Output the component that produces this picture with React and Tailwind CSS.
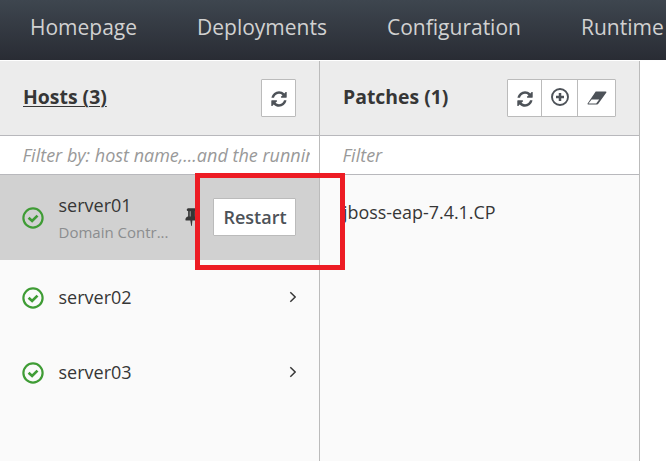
import React from "react";

const Refresh = () => (
  <svg className="mt-px block size-[18px] text-[#4d5258]" viewBox="0 0 1792 1792" fill="currentColor">
    <path d="M1639 1056q0 5-1 7-64 268-268 434.5t-478 166.5q-146 0-282.5-55t-243.5-157l-129 129q-19 19-45 19t-45-19-19-45v-448q0-26 19-45t45-19h448q26 0 45 19t19 45-19 45l-137 137q71 66 161 102t187 36q134 0 250-65t186-179q11-17 53-117 8-23 30-23h192q13 0 22.5 9.5t9.5 22.5zm25-800v448q0 26-19 45t-45 19h-448q-26 0-45-19t-19-45 19-45l138-138q-148-137-349-137-134 0-250 65t-186 179q-11 17-53 117-8 23-30 23h-199q-13 0-22.5-9.5t-9.5-22.5v-7q65-268 270-434.5t480-166.5q146 0 284 55.5t245 156.5l130-129q19-19 45-19t45 19 19 45z" />
  </svg>
);

const Add = () => (
  <svg className="mb-0.5 block size-[18px] text-[#4d5258]" viewBox="0 0 18 18" fill="none" stroke="currentColor">
    <circle cx="9" cy="9" r="8" strokeWidth="1.9" />
    <path d="M9 5v8M5 9h8" strokeWidth="2.5" />
  </svg>
);

const Eraser = () => (
  <svg className="block h-[14px] w-5 text-[#4d5258]" viewBox="0 0 20 14">
    <path d="M8.7 0.5H18.6Q20 0.5 19.2 1.8L11.3 12.8Q10.8 13.5 10 13.5H1.2Q-.1 13.5.8 12.2Z" fill="currentColor" />
    <path d="M4.6 8.4H12.2L9.2 12.6H1.5Z" fill="white" />
  </svg>
);

const Pin = () => (
  <svg className="mb-0.5 block size-[19px] shrink-0 text-[#363636]" viewBox="0 0 1792 1792" fill="currentColor">
    <path d="M800 864v-448q0-14-9-23t-23-9-23 9-9 23v448q0 14 9 23t23 9 23-9 9-23zm672 352q0 26-19 45t-45 19h-429l-51 483q-2 12-10.5 20.5t-20.5 8.5h-1q-27 0-32-27l-76-485h-404q-26 0-45-19t-19-45q0-123 78.5-221.5t177.5-98.5v-512q-52 0-90-38t-38-90 38-90 90-38h640q52 0 90 38t38 90-38 90-90 38v512q99 0 177.5 98.5t78.5 221.5z" />
  </svg>
);

const Ok = () => (
  <svg className="block size-[22px] shrink-0 text-[#3f9c35]" viewBox="0 0 22 22" fill="none" stroke="currentColor">
    <circle cx="11" cy="11" r="9.6" strokeWidth="2.2" />
    <path d="M6.6 10.8l3.5 3.2 5.4-5.4" strokeWidth="2.7" />
  </svg>
);

const Chevron = () => (
  <svg className="mb-px ml-auto block h-3 w-[7px]" viewBox="0 0 7 12" fill="none" stroke="#363636" strokeWidth="1.5">
    <path d="M1.3 1.3L6.2 6 1.3 10.7" />
  </svg>
);

const Title = ({ children, underline }) => (
  <h2 className={"text-[19.4px] leading-[28px] font-bold whitespace-nowrap text-[#363636] " + (underline ? "underline decoration-1 underline-offset-[2px]" : "")}>
    {children}
  </h2>
);

const ServerRow = ({ name }) => (
  <li className="flex h-[75px] items-center pr-[23px] pl-[22px]">
    <Ok />
    <span className="mb-0.5 ml-[14.5px] text-[18px] leading-6">{name}</span>
    <Chevron />
  </li>
);

export default function App() {
  return (
    <div className="relative flex h-[461px] w-[666px] flex-col overflow-hidden bg-white font-['Open_Sans',sans-serif] text-[#363636]">
      <nav className="flex h-[60px] shrink-0 bg-linear-to-b from-[#3e464f] to-[#292c34] pl-[30px] text-[21px] leading-[55px] whitespace-nowrap text-[#d1d1d1]">
        <span className="w-[167px] shrink-0">Homepage</span>
        <span className="w-[190px] shrink-0">Deployments</span>
        <span className="w-[194px] shrink-0">Configuration</span>
        <span className="shrink-0">Runtime</span>
      </nav>
      <main className="mt-px flex flex-1">
        <section className="flex w-80 flex-col border-r border-[#bbbbbb] bg-[#fafafa]">
          <header className="flex h-[75px] shrink-0 justify-between border-b border-[#b8b8bc] bg-[#ececec] pt-[18px] pr-[23px] pl-[23px]">
            <div className="pt-1"><Title underline>Hosts (3)</Title></div>
            <button className="flex h-[38px] w-[35px] items-center justify-center rounded-[1px] border border-[#bbb] bg-white"><Refresh /></button>
          </header>
          <div className="h-[39px] shrink-0 border-b border-[#b8b8bc] bg-white pr-[9px] pl-[22.5px]">
            <div className="overflow-hidden text-[18px] leading-[38px] whitespace-nowrap text-[#999] italic">Filter by: host name,...and the running</div>
          </div>
          <ul>
            <li className="flex h-[85px] items-center bg-[#d1d1d1] pl-[22px]">
              <Ok />
              <div className="mt-0.5 ml-[14.5px] w-[123.5px]">
                <div className="text-[18px] leading-[27px]">server01</div>
                <div className="text-[15px] leading-[27px] text-[#8b8d8f]">Domain Contr...</div>
              </div>
              <Pin />
              <button className="mb-px ml-[12px] h-[38px] w-[83px] rounded-[1px] border border-[#bbb] bg-white pl-px text-[18px] leading-[35px] font-semibold text-[#4d5258]">Restart</button>
            </li>
            <ServerRow name="server02" />
            <ServerRow name="server03" />
          </ul>
        </section>
        <section className="flex w-80 flex-col border-r border-[#bbbbbb] bg-[#fafafa]">
          <header className="flex h-[75px] shrink-0 justify-between border-b border-[#b8b8bc] bg-[#ececec] pt-[18px] pr-[23px] pl-[23px]">
            <div className="pt-1"><Title>Patches (1)</Title></div>
            <div className="flex h-[38px] divide-x divide-[#bbb] rounded-[1px] border border-[#bbb] bg-white">
              <button className="flex w-[34px] items-center justify-center"><Refresh /></button>
              <button className="flex w-9 items-center justify-center"><Add /></button>
              <button className="flex w-[37px] items-center justify-center"><Eraser /></button>
            </div>
          </header>
          <div className="h-[39px] shrink-0 border-b border-[#b8b8bc] bg-white pl-[22.5px] text-[18px] leading-[38px] text-[#999] italic">Filter</div>
          <div className="flex h-[75px] items-center pl-[23px] text-[17.9px]">jboss-eap-7.4.1.CP</div>
        </section>
      </main>
      <div className="absolute top-[173px] left-[195px] h-[97px] w-[150px] border-5 border-[#ed1c24]" />
    </div>
  );
}
